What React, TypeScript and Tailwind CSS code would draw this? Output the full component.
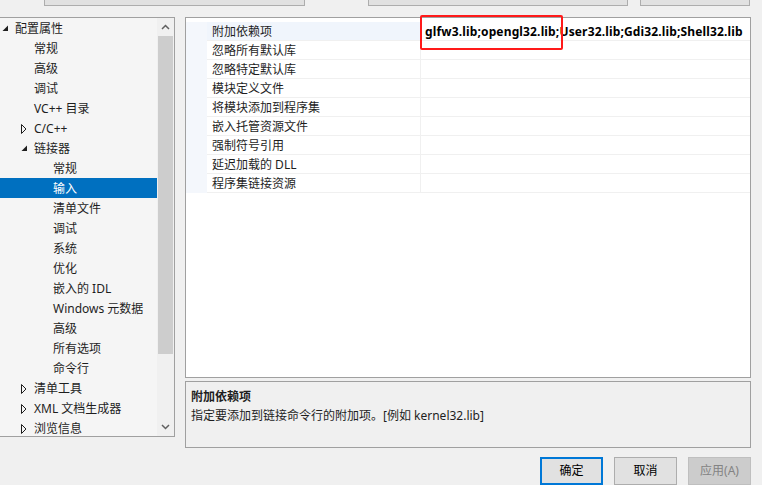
const treeItems: { label: string; level: number; state?: 'open' | 'closed'; selected?: boolean }[] = [
  { label: '配置属性', level: 0, state: 'open' },
  { label: '常规', level: 1 },
  { label: '高级', level: 1 },
  { label: '调试', level: 1 },
  { label: 'VC++ 目录', level: 1 },
  { label: 'C/C++', level: 1, state: 'closed' },
  { label: '链接器', level: 1, state: 'open' },
  { label: '常规', level: 2 },
  { label: '输入', level: 2, selected: true },
  { label: '清单文件', level: 2 },
  { label: '调试', level: 2 },
  { label: '系统', level: 2 },
  { label: '优化', level: 2 },
  { label: '嵌入的 IDL', level: 2 },
  { label: 'Windows 元数据', level: 2 },
  { label: '高级', level: 2 },
  { label: '所有选项', level: 2 },
  { label: '命令行', level: 2 },
  { label: '清单工具', level: 1, state: 'closed' },
  { label: 'XML 文档生成器', level: 1, state: 'closed' },
  { label: '浏览信息', level: 1, state: 'closed' },
];

const props = [
  '附加依赖项',
  '忽略所有默认库',
  '忽略特定默认库',
  '模块定义文件',
  '将模块添加到程序集',
  '嵌入托管资源文件',
  '强制符号引用',
  '延迟加载的 DLL',
  '程序集链接资源',
];

function Arrow({ state, selected }: { state?: 'open' | 'closed'; selected?: boolean }) {
  if (!state) return <span className="w-[15px] shrink-0" />;
  const c = selected ? '#fff' : '#1e1e1e';
  return (
    <span className="w-[15px] shrink-0 flex items-center pl-[2px]">
      {state === 'open' ? (
        <svg width="7" height="7" viewBox="0 0 7 7">
          <polygon points="6,0.5 6,6 0.5,6" fill={c} />
        </svg>
      ) : (
        <svg width="6" height="10" viewBox="0 0 6 10">
          <polygon points="0.5,0.5 5,5 0.5,9.5" fill="none" stroke={c} strokeWidth="1" />
        </svg>
      )}
    </span>
  );
}

export default function App() {
  return (
    <div className="w-[762px] h-[485px] overflow-hidden bg-[#f0f0f0] text-[12px] text-[#1e1e1e] font-['Noto_Sans','Noto_Sans_CJK_SC',sans-serif]">
      {/* clipped buttons of the upper dialog part */}
      <div className="flex h-[6px]">
        <div className="ml-[44px] w-[261px] h-[6px] border border-t-0 border-[#adadad] bg-[#e1e1e1]" />
        <div className="ml-[63px] w-[260px] h-[6px] border border-t-0 border-[#adadad] bg-[#e1e1e1]" />
        <div className="ml-[12px] w-[110px] h-[6px] border border-t-0 border-[#adadad] bg-[#e1e1e1]" />
      </div>

      <div className="flex mt-[11px]">
        {/* tree */}
        <div className="-ml-px w-[176px] h-[420px] border border-[#a0a0a0] flex bg-[#f5f5f5] overflow-hidden">
          <div className="w-[157px] shrink-0 flex flex-col">
            {treeItems.map((it, i) => (
              <div
                key={i}
                className={`h-[20px] shrink-0 flex items-center pt-px leading-none ${it.selected ? 'bg-[#0070c0] text-white' : ''}`}
                style={{ paddingLeft: it.level * 19 }}
              >
                <Arrow state={it.state} selected={it.selected} />
                <span className="whitespace-nowrap">{it.label}</span>
              </div>
            ))}
          </div>
          <div className="w-[17px] shrink-0 flex flex-col bg-[#f0f0f0]">
            <div className="h-[18px] flex items-center justify-center">
              <svg width="9" height="6" viewBox="0 0 9 6">
                <polyline points="1,5 4.5,1.5 8,5" fill="none" stroke="#606060" strokeWidth="1.5" />
              </svg>
            </div>
            <div className="h-[318px] mx-px bg-[#cdcdcd]" />
            <div className="flex-1" />
            <div className="h-[18px] flex items-center justify-center">
              <svg width="9" height="6" viewBox="0 0 9 6">
                <polyline points="1,1 4.5,4.5 8,1" fill="none" stroke="#606060" strokeWidth="1.5" />
              </svg>
            </div>
          </div>
        </div>

        {/* right column */}
        <div className="ml-[10px] w-[566px] flex flex-col">
          <div className="relative h-[361px] border border-[#a0a0a0] bg-white pt-[4px]">
            {props.map((p, i) => (
              <div key={i} className="flex h-[19px] leading-none">
                <div className="w-[21px] shrink-0 bg-[#f4f7fc]" />
                <div
                  className={`w-[214px] shrink-0 flex items-center pl-[5px] pt-px border-b border-r border-[#f0f0f0] ${i === 0 ? 'bg-[#f0f5fc]' : ''}`}
                >
                  {p}
                </div>
                <div className="flex-1 flex items-center pl-[4px] pt-px border-b border-[#f0f0f0]">
                  {i === 0 && (
                    <span className="font-bold text-[12px] text-black whitespace-nowrap tracking-[0.15px]">
                      glfw3.lib;opengl32.lib;User32.lib;Gdi32.lib;Shell32.lib
                    </span>
                  )}
                </div>
              </div>
            ))}
            <div className="absolute left-[234px] top-[-3px] w-[143px] h-[35px] border-2 border-[#ff1a1a] rounded-[2px]" />
          </div>

          <div className="mt-[3px] h-[67px] border border-[#a0a0a0] px-[5px] pt-[5px] leading-[19px]">
            <div className="font-bold">附加依赖项</div>
            <div>指定要添加到链接命令行的附加项。[例如 kernel32.lib]</div>
          </div>

          <div className="mt-[9px] flex justify-end gap-[11px]">
            <button className="w-[63px] h-[28px] border-2 border-[#0078d7] bg-[#e1e1e1] text-[12px] text-black">确定</button>
            <button className="w-[63px] h-[28px] border border-[#adadad] bg-[#e1e1e1] text-[12px] text-black">取消</button>
            <button className="w-[63px] h-[28px] border border-[#bfbfbf] bg-[#cccccc] text-[12px] text-[#838383]">应用(A)</button>
          </div>
        </div>
      </div>
    </div>
  );
}
